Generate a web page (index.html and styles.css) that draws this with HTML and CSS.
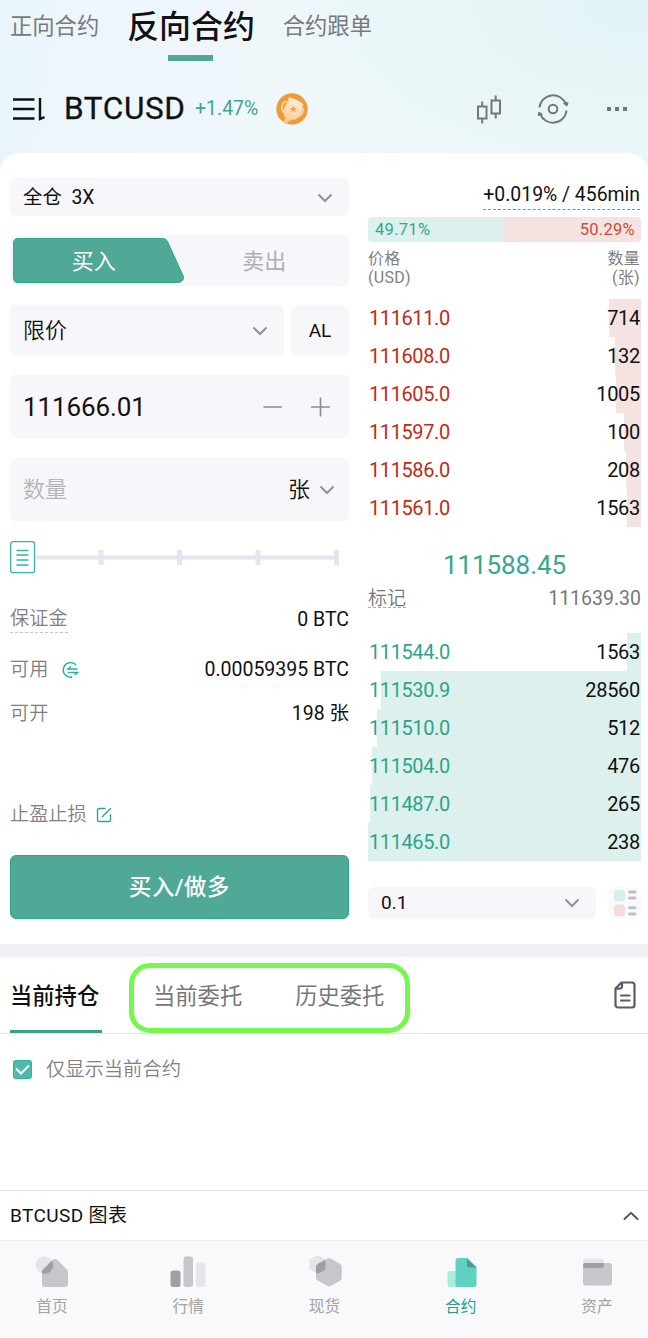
FILE: index.html
```html
<!DOCTYPE html>
<html lang="zh-CN">
<head>
  <meta charset="UTF-8">
  <meta name="viewport" content="width=device-width, initial-scale=1.0">
  <title>BTCUSD 反向合约</title>
  <link rel="stylesheet" href="styles.css">
</head>
<body>
  <header class="header">
    <nav class="market-tabs">
      <a class="market-tab">正向合约</a>
      <a class="market-tab active">反向合约</a>
      <a class="market-tab">合约跟单</a>
    </nav>
    <div class="pair">
      <svg class="pair-menu" width="34" height="24" viewBox="0 0 34 24" fill="none" stroke="#111" stroke-width="2.4">
        <path d="M1 2.500h21.500M1 12h21.500M1 21.500h21.500M28 1v21l4.500-1.800"/>
      </svg>
      <h1>BTCUSD</h1>
      <span class="change">+1.47%</span>
      <svg class="trophy" width="32" height="32" viewBox="0 0 32 32">
        <defs>
          <linearGradient id="cup" x1="0.7" y1="0" x2="0.3" y2="1">
            <stop offset="0" stop-color="#fff3df"/>
            <stop offset="1" stop-color="#f8c98c"/>
          </linearGradient>
        </defs>
        <circle cx="16" cy="16" r="15.700" fill="#f29a38"/>
        <path d="M11 8.500C5 8 5 17 8 19.500M26 15c3.500 1 0 8-4 8" fill="none" stroke="#fbdcae" stroke-width="1.600"/>
        <path d="M12.500 4.500q8 1 15 7l-1.500 2.500c.5 6-3 12.500-9 12.800-3 .2-5 1-6.500 4.200l-3.500-1.500 2.500-4c-3.500-4.500-1.500-13 3-17.500z" fill="url(#cup)"/>
        <path d="M17.300 12.500l1 2.400 2.600.2-2 1.700.6 2.500-2.200-1.300-2.200 1.300.6-2.500-2-1.700 2.600-.2z" fill="#f0a452"/>
      </svg>
      <div class="pair-tools">
        <svg width="26" height="30" viewBox="0 0 26 30" fill="none" stroke="#757679" stroke-width="2">
          <path d="M2 12.500h8.500v12H2zM6.200 7.500v5M6.200 24.500v5M15.500 6.500H24v13h-8.500zM19.700 1.500v5M19.700 19.500v5"/>
        </svg>
        <svg width="32" height="32" viewBox="0 0 32 32" fill="none" stroke="#757679" stroke-width="2">
          <circle cx="16" cy="16" r="4.300"/>
          <path d="M2.500 14.500a13.600 13.600 0 0 1 26.300-3.300M29.500 17.500a13.600 13.600 0 0 1-26.300 3.300"/>
          <path d="M26.500 10.500l3.500 2.500 1-3.500zM5.500 21.500L2 19l-1 3.500z" fill="#757679" stroke-width="1"/>
        </svg>
        <svg class="more" width="22" height="6" viewBox="0 0 22 6" fill="#757679">
          <path d="M1 1h4v4H1zM9 1h4v4H9zM17 1h4v4h-4z"/>
        </svg>
      </div>
    </div>
  </header>

  <main class="trade">
    <section class="order-form">
      <div class="field field-margin">
        <span>全仓&nbsp; 3X</span>
        <svg class="chevron" viewBox="0 0 16 10"><path d="M1.500 1.500L8 8l6.500-6.500"/></svg>
      </div>
      <div class="side-switch">
        <svg class="side-shape" width="171" height="45" viewBox="0 0 171 45">
          <path d="M5 .5h145q3 0 4.500 3l15.500 34q2 5-4 7H5q-4.500 0-4.500-5V5q0-4.500 4.500-4.500z" fill="#4fa996" stroke="#2ca68c"/>
        </svg>
        <span class="side-buy">买入</span>
        <span class="side-sell">卖出</span>
      </div>
      <div class="type-row">
        <div class="field field-type">
          <span>限价</span>
          <svg class="chevron" viewBox="0 0 16 10"><path d="M1.500 1.500L8 8l6.500-6.500"/></svg>
        </div>
        <div class="field field-al">AL</div>
      </div>
      <div class="field field-price">
        <span>111666.01</span>
        <svg width="68" height="20" viewBox="0 0 68 20" fill="none" stroke="#8b8b90" stroke-width="1.600">
          <path d="M.5 10H19M48 10h19M57.500.5v19"/>
        </svg>
      </div>
      <div class="field field-amount">
        <span class="placeholder">数量</span>
        <span class="unit">张</span>
        <svg class="chevron" viewBox="0 0 16 10"><path d="M1.500 1.500L8 8l6.500-6.500"/></svg>
      </div>
      <svg class="slider" width="339" height="33" viewBox="0 0 339 33" fill="none">
        <path d="M26 16.500h302" stroke="#e6e5ed" stroke-width="4"/>
        <path d="M91 9v15M169.500 9v15M248 9v15M326.500 9v15" stroke="#e6e5ed" stroke-width="5"/>
        <rect x=".7" y=".7" width="23.800" height="31" rx="2.500" fill="#fff" stroke="#36b5a4" stroke-width="1.300"/>
        <path d="M6.500 9.500h12M6.500 14h12M6.500 19h12M6.500 24h12" stroke="#36b5a4" stroke-width="1.300"/>
      </svg>
      <div class="info">
        <div class="info-row">
          <span class="label hint">保证金</span>
          <span class="value">0 BTC</span>
        </div>
        <div class="info-row row-available">
          <span class="label">可用</span>
          <svg width="18" height="18" viewBox="0 0 18 18" fill="none" stroke="#2bb09a" stroke-width="1.500">
            <path d="M15 4A7.300 7.300 0 1 0 11 16.100"/>
            <path d="M16.500 8H7l3-2.500M7 11.500h9.500L13.500 14"/>
          </svg>
          <span class="value">0.00059395 BTC</span>
        </div>
        <div class="info-row">
          <span class="label">可开</span>
          <span class="value">198 张</span>
        </div>
      </div>
      <div class="tpsl">
        <span class="label">止盈止损</span>
        <svg width="16" height="16" viewBox="0 0 16 16" fill="none" stroke="#2ca68c" stroke-width="1.400">
          <path d="M9.500 1.500H3A1.500 1.500 0 0 0 1.500 3v10A1.500 1.500 0 0 0 3 14.500h10a1.500 1.500 0 0 0 1.500-1.500V7M6 10l8.800-8.800"/>
        </svg>
      </div>
      <button class="submit">买入/做多</button>
    </section>

    <section class="book">
      <div class="funding"><span>+0.019% / 456min</span></div>
      <div class="ratio">
        <span class="ratio-buy" style="width: 49.71%">49.71%</span>
        <span class="ratio-sell">50.29%</span>
      </div>
      <div class="book-head">
        <span>价格<br>(USD)</span>
        <span>数量<br>(张)</span>
      </div>
      <ul class="levels asks">
        <li style="background-size: 32px 100%"><b>111611.0</b><span>714</span></li>
        <li style="background-size: 26px 100%"><b>111608.0</b><span>132</span></li>
        <li style="background-size: 25px 100%"><b>111605.0</b><span>1005</span></li>
        <li style="background-size: 17px 100%"><b>111597.0</b><span>100</span></li>
        <li style="background-size: 15px 100%"><b>111586.0</b><span>208</span></li>
        <li style="background-size: 14px 100%"><b>111561.0</b><span>1563</span></li>
      </ul>
      <div class="last-price">111588.45</div>
      <div class="mark"><span class="mark-label">标记</span><span class="mark-price">111639.30</span></div>
      <ul class="levels bids">
        <li style="background-size: 14px 100%"><b>111544.0</b><span>1563</span></li>
        <li style="background-size: 260px 100%"><b>111530.9</b><span>28560</span></li>
        <li style="background-size: 264px 100%"><b>111510.0</b><span>512</span></li>
        <li style="background-size: 269px 100%"><b>111504.0</b><span>476</span></li>
        <li style="background-size: 271px 100%"><b>111487.0</b><span>265</span></li>
        <li style="background-size: 273px 100%"><b>111465.0</b><span>238</span></li>
      </ul>
      <div class="book-foot">
        <div class="field field-step">
          <span>0.1</span>
          <svg class="chevron" viewBox="0 0 16 10"><path d="M1.500 1.500L8 8l6.500-6.500"/></svg>
        </div>
        <svg class="depth-mode" width="32" height="32" viewBox="0 0 32 32">
          <rect width="32" height="32" rx="6" fill="#fafafc"/>
          <rect x="5" y="3" width="11" height="11.500" rx="3" fill="#d5efec"/>
          <rect x="5" y="17.500" width="11" height="11.500" rx="3" fill="#f2dcdc"/>
          <path d="M20.500 5h5.500M20.500 11h5.500M20.500 20.700h5.500M20.500 27h5.500" stroke="#bfbec9" stroke-width="3" stroke-linecap="round"/>
        </svg>
      </div>
    </section>
  </main>

  <section class="positions">
    <nav class="position-tabs">
      <a class="position-tab active">当前持仓</a>
      <div class="highlight">
        <a class="position-tab">当前委托</a>
        <a class="position-tab">历史委托</a>
      </div>
      <svg class="doc" width="22" height="28" viewBox="0 0 22 28" fill="none" stroke="#5c5b69" stroke-width="2.200" stroke-linejoin="round" stroke-linecap="round">
        <path d="M7.500 1.500H18A2.800 2.800 0 0 1 20.500 4v20a2.500 2.500 0 0 1-2.500 2.500H4A2.500 2.500 0 0 1 1.500 24V7.500zM8 2v3.500A2.200 2.200 0 0 1 5.800 7.700H2M7 14.500h8.500M7 19.500h8.500"/>
      </svg>
    </nav>
    <label class="only-current">
      <svg width="19" height="19" viewBox="0 0 19 19" fill="none">
        <rect x=".5" y=".5" width="18" height="18" rx="2" fill="#50b9ad" stroke="#2db3a2"/>
        <path d="M3 8.500l5 5 8-8" stroke="#fff" stroke-width="2"/>
      </svg>
      <span>仅显示当前合约</span>
    </label>
  </section>

  <section class="chart-bar">
    <span>BTCUSD 图表</span>
    <svg width="16" height="10" viewBox="0 0 16 10" fill="none" stroke="#55555f" stroke-width="2" stroke-linecap="round"><path d="M1.500 8L8 1.800 14.500 8"/></svg>
  </section>

  <footer class="tabbar">
    <a class="tabbar-item">
      <svg width="36" height="34" viewBox="0 0 36 34">
        <defs><clipPath id="roof"><path d="M9 14.500L18.500 5q2.500-2 5 0l9 9q1.500 1.500 1.500 4v11q0 3-3 3H11q-3 0-3-3V17q0-1.500 1-2.500z"/></clipPath></defs>
        <circle cx="10.500" cy="10" r="8.800" fill="#e4e4eb"/>
        <path d="M9 14.500L18.500 5q2.500-2 5 0l9 9q1.500 1.500 1.500 4v11q0 3-3 3H11q-3 0-3-3V17q0-1.500 1-2.500z" fill="#c5c7cc"/>
        <circle cx="10.500" cy="10" r="8.800" fill="#a09fa6" clip-path="url(#roof)"/>
      </svg>
      <span>首页</span>
    </a>
    <a class="tabbar-item">
      <svg width="36" height="34" viewBox="0 0 36 34">
        <rect x=".5" y="15.500" width="10" height="16.500" rx="2.500" fill="#a09fa6"/>
        <rect x="13.500" y="1.500" width="9.500" height="30.500" rx="2.500" fill="#c5c7cc"/>
        <rect x="26" y="7.500" width="9.500" height="24.500" rx="2.500" fill="#e4e4eb"/>
      </svg>
      <span>行情</span>
    </a>
    <a class="tabbar-item">
      <svg width="36" height="34" viewBox="0 0 36 34">
        <defs><clipPath id="hex"><path d="M20 3.800q2-1 4 0l9 5q1.800 1 1.800 3v11q0 2-1.800 3l-9 5q-2 1-4 0l-9-5q-2-1-2-3v-11q0-2 2-3z"/></clipPath></defs>
        <path d="M9 .8q1.500-.8 3 0l5 2.700q1.500.8 1.500 2.700v6.500q0 1.800-1.500 2.600l-5 2.700q-1.500.8-3 0l-5-2.700q-1.500-.8-1.500-2.600V6.200q0-1.900 1.500-2.700z" fill="#e4e4eb"/>
        <path d="M20 3.800q2-1 4 0l9 5q1.800 1 1.800 3v11q0 2-1.800 3l-9 5q-2 1-4 0l-9-5q-2-1-2-3v-11q0-2 2-3z" fill="#c5c7cc"/>
        <path d="M9 .8q1.500-.8 3 0l5 2.700q1.500.8 1.500 2.700v6.500q0 1.800-1.500 2.600l-5 2.700q-1.500.8-3 0l-5-2.700V3.500z" fill="#a09fa6" clip-path="url(#hex)"/>
      </svg>
      <span>现货</span>
    </a>
    <a class="tabbar-item active">
      <svg width="36" height="34" viewBox="0 0 36 34">
        <rect x="4.500" y="16" width="14" height="16" rx="2.500" fill="#a5efdc"/>
        <path d="M15 3h9.500l9 9v17.500q0 2.500-2.500 2.500H15q-2.500 0-2.500-2.500v-24Q12.500 3 15 3z" fill="#60d2bf"/>
        <path d="M23.800 3.500l9.500 9h-7q-2.500 0-2.500-2.500z" fill="#489b96"/>
      </svg>
      <span>合约</span>
    </a>
    <a class="tabbar-item">
      <svg width="36" height="34" viewBox="0 0 36 34">
        <rect x="4" y="3.500" width="21" height="12" rx="3" fill="#e4e4eb"/>
        <rect x="4" y="8" width="29" height="22.500" rx="3" fill="#c5c7cc"/>
        <path d="M6.500 8H25v2.500Q25 13 22.500 13h-16Q4 13 4 10.500T6.500 8z" fill="#a09fa6"/>
      </svg>
      <span>资产</span>
    </a>
  </footer>
</body>
</html>
```

FILE: styles.css
```css
* {
  box-sizing: border-box;
}
body {
  margin: 0;
  width: 648px;
  height: 1338px;
  overflow: hidden;
  display: flex;
  flex-direction: column;
  background: #fff;
  color: #111;
  font-family: Roboto, "Noto Sans CJK SC", sans-serif;
  font-size: 20px;
  line-height: 24px;
}
svg {
  display: block;
  flex: none;
}

/* Header */
.header {
  height: 174px;
  flex: none;
  background:
    radial-gradient(ellipse 400px 220px at 100% 0, #e1f4f8 0%, rgba(229, 245, 246, 0.9) 35%, rgba(240, 247, 251, 0) 100%),
    linear-gradient(100deg, #eaf5fb 0%, #f0f7fb 40%, #eff7fa 100%);
}
.market-tabs {
  display: flex;
  height: 61px;
  padding-left: 10px;
  gap: 28px;
}
.market-tab {
  font-size: 22.3px;
  line-height: 53px;
  color: #77797c;
}
.market-tab.active {
  font-size: 31.9px;
  line-height: 55px;
  font-weight: 500;
  color: #111;
}
.market-tab.active::after {
  content: "";
  display: block;
  width: 45px;
  height: 6px;
  margin: 0 auto;
  background: #4fa996;
}
.pair {
  display: flex;
  align-items: center;
  height: 96px;
  padding: 0 20px 0 12px;
}
.pair-menu {
  margin-right: 18px;
}
.pair h1 {
  margin: 0;
  width: 131px;
  font-size: 31.5px;
  font-weight: 400;
  letter-spacing: 0.6px;
  -webkit-text-stroke: 0.3px #111;
}
.change {
  width: 81px;
  font-size: 19.5px;
  color: #3fa58f;
}
.pair-tools {
  display: flex;
  align-items: center;
  gap: 35px;
  margin-left: auto;
}
.more {
  margin-left: 2px;
}

/* Trading area */
.trade {
  display: flex;
  justify-content: space-between;
  height: 791px;
  flex: none;
  margin-top: -21px;
  padding: 25px 7px 0 10px;
  background: #fff;
  border-radius: 20px 20px 0 0;
}
.order-form {
  width: 339px;
}
.field {
  display: flex;
  align-items: center;
  justify-content: space-between;
  padding: 0 16px 0 13px;
  border-radius: 6px;
  background: #f7f6fb;
}
.chevron {
  width: 16px;
  height: 10px;
  fill: none;
  stroke: #919196;
  stroke-width: 2;
}
.field-margin {
  height: 38px;
  padding-top: 2px;
  font-size: 19.4px;
}
.side-switch {
  display: grid;
  grid-template-columns: 1fr 1fr;
  align-items: center;
  position: relative;
  height: 51px;
  margin-top: 19px;
  padding-top: 2px;
  border-radius: 6px;
  background: #f7f6fb;
  font-size: 22px;
  text-align: center;
}
.side-shape {
  position: absolute;
  left: 3px;
  top: 3px;
}
.side-buy {
  position: relative;
  left: -1px;
  color: #fff;
}
.side-sell {
  color: #b0b0b3;
}
.type-row {
  display: flex;
  gap: 7px;
  height: 51px;
  margin-top: 19px;
}
.field-type {
  flex: 1;
  padding-top: 1px;
  font-size: 22px;
  font-weight: 350;
}
.field-al {
  width: 58px;
  padding: 0;
  justify-content: center;
  font-size: 19px;
}
.field-price {
  height: 63px;
  margin-top: 19px;
  padding-right: 18px;
  font-size: 26px;
  letter-spacing: -0.1px;
}
.field-amount {
  height: 63px;
  margin-top: 20px;
  padding-right: 14px;
  font-size: 22px;
  font-weight: 350;
}
.placeholder {
  color: #b4b4b7;
}
.unit {
  margin: 0 9px 0 auto;
}
.slider {
  margin-top: 20px;
}
.info {
  margin-top: 21px;
}
.info-row {
  display: flex;
  align-items: center;
  height: 50px;
}
.label {
  font-size: 19.2px;
  font-weight: 350;
  color: #808083;
}
.info-row .value {
  margin-left: auto;
  font-size: 19.5px;
}
.hint {
  height: 26px;
  border-bottom: 1px dashed #c4c4c6;
}
.row-available svg {
  margin-left: 13px;
}
.row-available + .info-row {
  height: 38px;
}
.tpsl {
  display: flex;
  align-items: center;
  gap: 9px;
  height: 30px;
  margin-top: 67px;
}
.submit {
  display: block;
  width: 100%;
  height: 64px;
  margin-top: 25px;
  padding: 0 0 4px;
  border: 1px solid #2ca68c;
  border-radius: 6px;
  background: #4fa996;
  color: #fff;
  font: 500 22.4px Roboto, "Noto Sans CJK SC", sans-serif;
  letter-spacing: 0.5px;
}

/* Order book */
.book {
  width: 273px;
}
.funding {
  display: flex;
  justify-content: flex-end;
  height: 39px;
  padding-right: 1px;
  font-size: 19.4px;
}
.funding span {
  height: 32px;
  line-height: 33px;
  border-bottom: 1px dashed #888;
}
.ratio {
  display: flex;
  height: 25px;
  border-radius: 4px;
  overflow: hidden;
  font-size: 16.5px;
  line-height: 25px;
  letter-spacing: 0.3px;
}
.ratio-buy {
  padding-left: 7px;
  background: #dcf1ed;
  color: #36a78f;
}
.ratio-sell {
  flex: 1;
  padding-right: 6px;
  background: #f5e3e1;
  color: #ca4d3b;
  text-align: right;
}
.book-head {
  display: flex;
  justify-content: space-between;
  height: 57px;
  padding: 7px 1px 0 0;
  font-size: 16px;
  line-height: 19px;
  letter-spacing: 0.3px;
  color: #808083;
}
.book-head span:last-child {
  text-align: right;
}
.levels {
  margin: 0;
  padding: 0;
  list-style: none;
}
.levels li {
  display: flex;
  justify-content: space-between;
  height: 38px;
  padding: 0 1px;
  line-height: 38px;
  background-repeat: no-repeat;
  background-position: right top;
}
.levels b {
  font-weight: 400;
  letter-spacing: -0.4px;
}
.levels span {
  letter-spacing: -0.3px;
}
.asks li {
  background-image: linear-gradient(#f5e3e1, #f5e3e1);
}
.asks b {
  color: #c32a18;
}
.bids li {
  background-image: linear-gradient(#dcf1ed, #dcf1ed);
}
.bids b {
  color: #30a28b;
}
.last-price {
  height: 54px;
  padding-top: 26px;
  font-size: 26px;
  letter-spacing: -0.1px;
  text-align: center;
  color: #36a78f;
}
.mark {
  display: flex;
  justify-content: space-between;
  height: 52px;
  padding-top: 6px;
  font-size: 19.5px;
  color: #77777a;
}
.mark-label {
  height: 21px;
  font-size: 19px;
  font-weight: 350;
  border-bottom: 1px dashed #aaa;
}
.book-foot {
  display: flex;
  justify-content: space-between;
  margin-top: 26px;
}
.field-step {
  width: 228px;
  height: 32px;
  font-size: 19px;
}

/* Positions */
.positions {
  flex: 1;
  border-top: 13px solid #f1f0f5;
}
.position-tabs {
  display: flex;
  align-items: flex-start;
  height: 77px;
  padding: 0 12px 0 10px;
  border-bottom: 1px solid #e4e4e8;
}
.position-tab {
  font-size: 22.3px;
  line-height: 78px;
  color: #77777a;
}
.position-tab.active {
  width: 92px;
  height: 76px;
  border-bottom: 3px solid #3b9f8b;
  font-weight: 500;
  color: #111;
}
.highlight {
  display: flex;
  width: 281px;
  height: 70px;
  margin: 6px 0 0 27px;
  padding-left: 19px;
  gap: 53px;
  border: 5px solid #74f84c;
  border-radius: 21px;
}
.highlight .position-tab {
  line-height: 56px;
}
.doc {
  margin: 24px 0 0 auto;
}
.only-current {
  display: flex;
  align-items: center;
  gap: 14px;
  height: 70px;
  padding-left: 13px;
  font-size: 19.3px;
  font-weight: 350;
  color: #808083;
}
.only-current span {
  padding-top: 2px;
}

/* Chart drawer and tab bar */
.chart-bar {
  display: flex;
  align-items: center;
  justify-content: space-between;
  height: 50px;
  flex: none;
  padding: 1px 9px 0 10px;
  border-top: 1px solid #e2e2e5;
  font-size: 19px;
  letter-spacing: 0.4px;
}
.tabbar {
  display: flex;
  height: 98px;
  flex: none;
  justify-content: space-between;
  padding: 14px 23px 0 24px;
  border-top: 1px solid #ededf0;
  background: #f9f9fc;
}
.tabbar-item {
  display: flex;
  flex-direction: column;
  align-items: center;
  width: 56px;
  font-size: 15.7px;
  color: #a3a3a6;
}
.tabbar-item span {
  margin-top: 6px;
}
.tabbar-item.active {
  color: #22a388;
}
```
